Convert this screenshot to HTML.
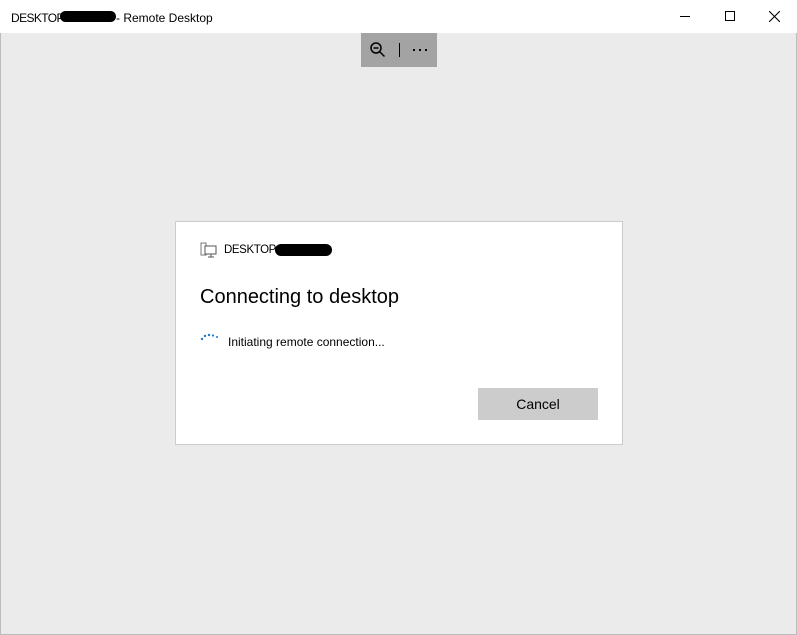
<!DOCTYPE html>
<html><head><style>
*{margin:0;padding:0;box-sizing:border-box}
body{width:797px;height:635px;background:#ebebeb;font-family:"Liberation Sans",sans-serif;position:relative;overflow:hidden}
.t{position:absolute;left:0;top:0;width:797px;height:33px;background:#fff;}
.abs{position:absolute}
</style></head><body>
<div class="abs" style="left:0;top:0;width:797px;height:635px;border:1px solid #bdbdbd"></div>
<div class="t">
 <div class="abs" style="left:11px;top:11px;font-size:12px;color:#000;letter-spacing:-0.6px">DESKTOP</div>
 <div class="abs" style="left:60px;top:11px;width:56px;height:11px;background:#000;border-radius:6px"></div>
 <div class="abs" style="left:116px;top:11px;font-size:12px;color:#000">- Remote Desktop</div>
 <div class="abs" style="left:680px;top:16px;width:10px;height:1px;background:#000"></div>
 <div class="abs" style="left:725px;top:11px;width:10px;height:10px;border:1px solid #000"></div>
 <svg class="abs" style="left:769px;top:11px" width="11" height="11"><path d="M0 0L11 11M11 0L0 11" stroke="#000" stroke-width="1.1"/></svg>
</div>
<div class="abs" style="left:361px;top:33px;width:76px;height:34px;background:#a3a3a3">
 <svg class="abs" style="left:8px;top:8px" width="18" height="18"><circle cx="7" cy="7" r="5" fill="none" stroke="#000" stroke-width="1.5"/><path d="M4.5 7h5M10.5 10.5l5 5" stroke="#000" stroke-width="1.5"/></svg>
 <div class="abs" style="left:38px;top:10px;width:1px;height:14px;background:#000"></div>
 <div class="abs" style="left:52px;top:16px;width:14px;height:2px;background:repeating-linear-gradient(90deg,#000 0 2px,transparent 2px 6px)"></div>
</div>
<div class="abs" style="left:175px;top:221px;width:448px;height:224px;background:#fff;border:1px solid #ccc">
 <svg class="abs" style="left:24px;top:20px" width="18" height="16"><rect x="1" y="1" width="5" height="12" fill="none" stroke="#777"/><rect x="5" y="4" width="11" height="8" fill="#fff" stroke="#555"/><path d="M8 15h6M11 12v3" stroke="#555"/></svg>
 <div class="abs" style="left:48px;top:22px;font-size:11.5px;color:#000;letter-spacing:-0.4px">DESKTOP</div>
 <div class="abs" style="left:99px;top:22px;width:57px;height:12px;background:#000;border-radius:6px"></div>
 <div class="abs" style="left:24px;top:64px;font-size:20px;color:#000">Connecting to desktop</div>
 <svg class="abs" style="left:24px;top:110px" width="20" height="10"><g fill="#1e7bd1"><circle cx="2" cy="7" r="1.2"/><circle cx="5" cy="4" r="1.2"/><circle cx="9" cy="3" r="1.2"/><circle cx="13" cy="3.5" r="1.1"/><circle cx="17" cy="5" r="1"/></g></svg>
 <div class="abs" style="left:52px;top:113px;font-size:12px;color:#000">Initiating remote connection...</div>
 <div class="abs" style="left:302px;top:166px;width:120px;height:32px;background:#ccc;font-size:14px;color:#000;text-align:center;line-height:32px">Cancel</div>
</div>
</body></html>
